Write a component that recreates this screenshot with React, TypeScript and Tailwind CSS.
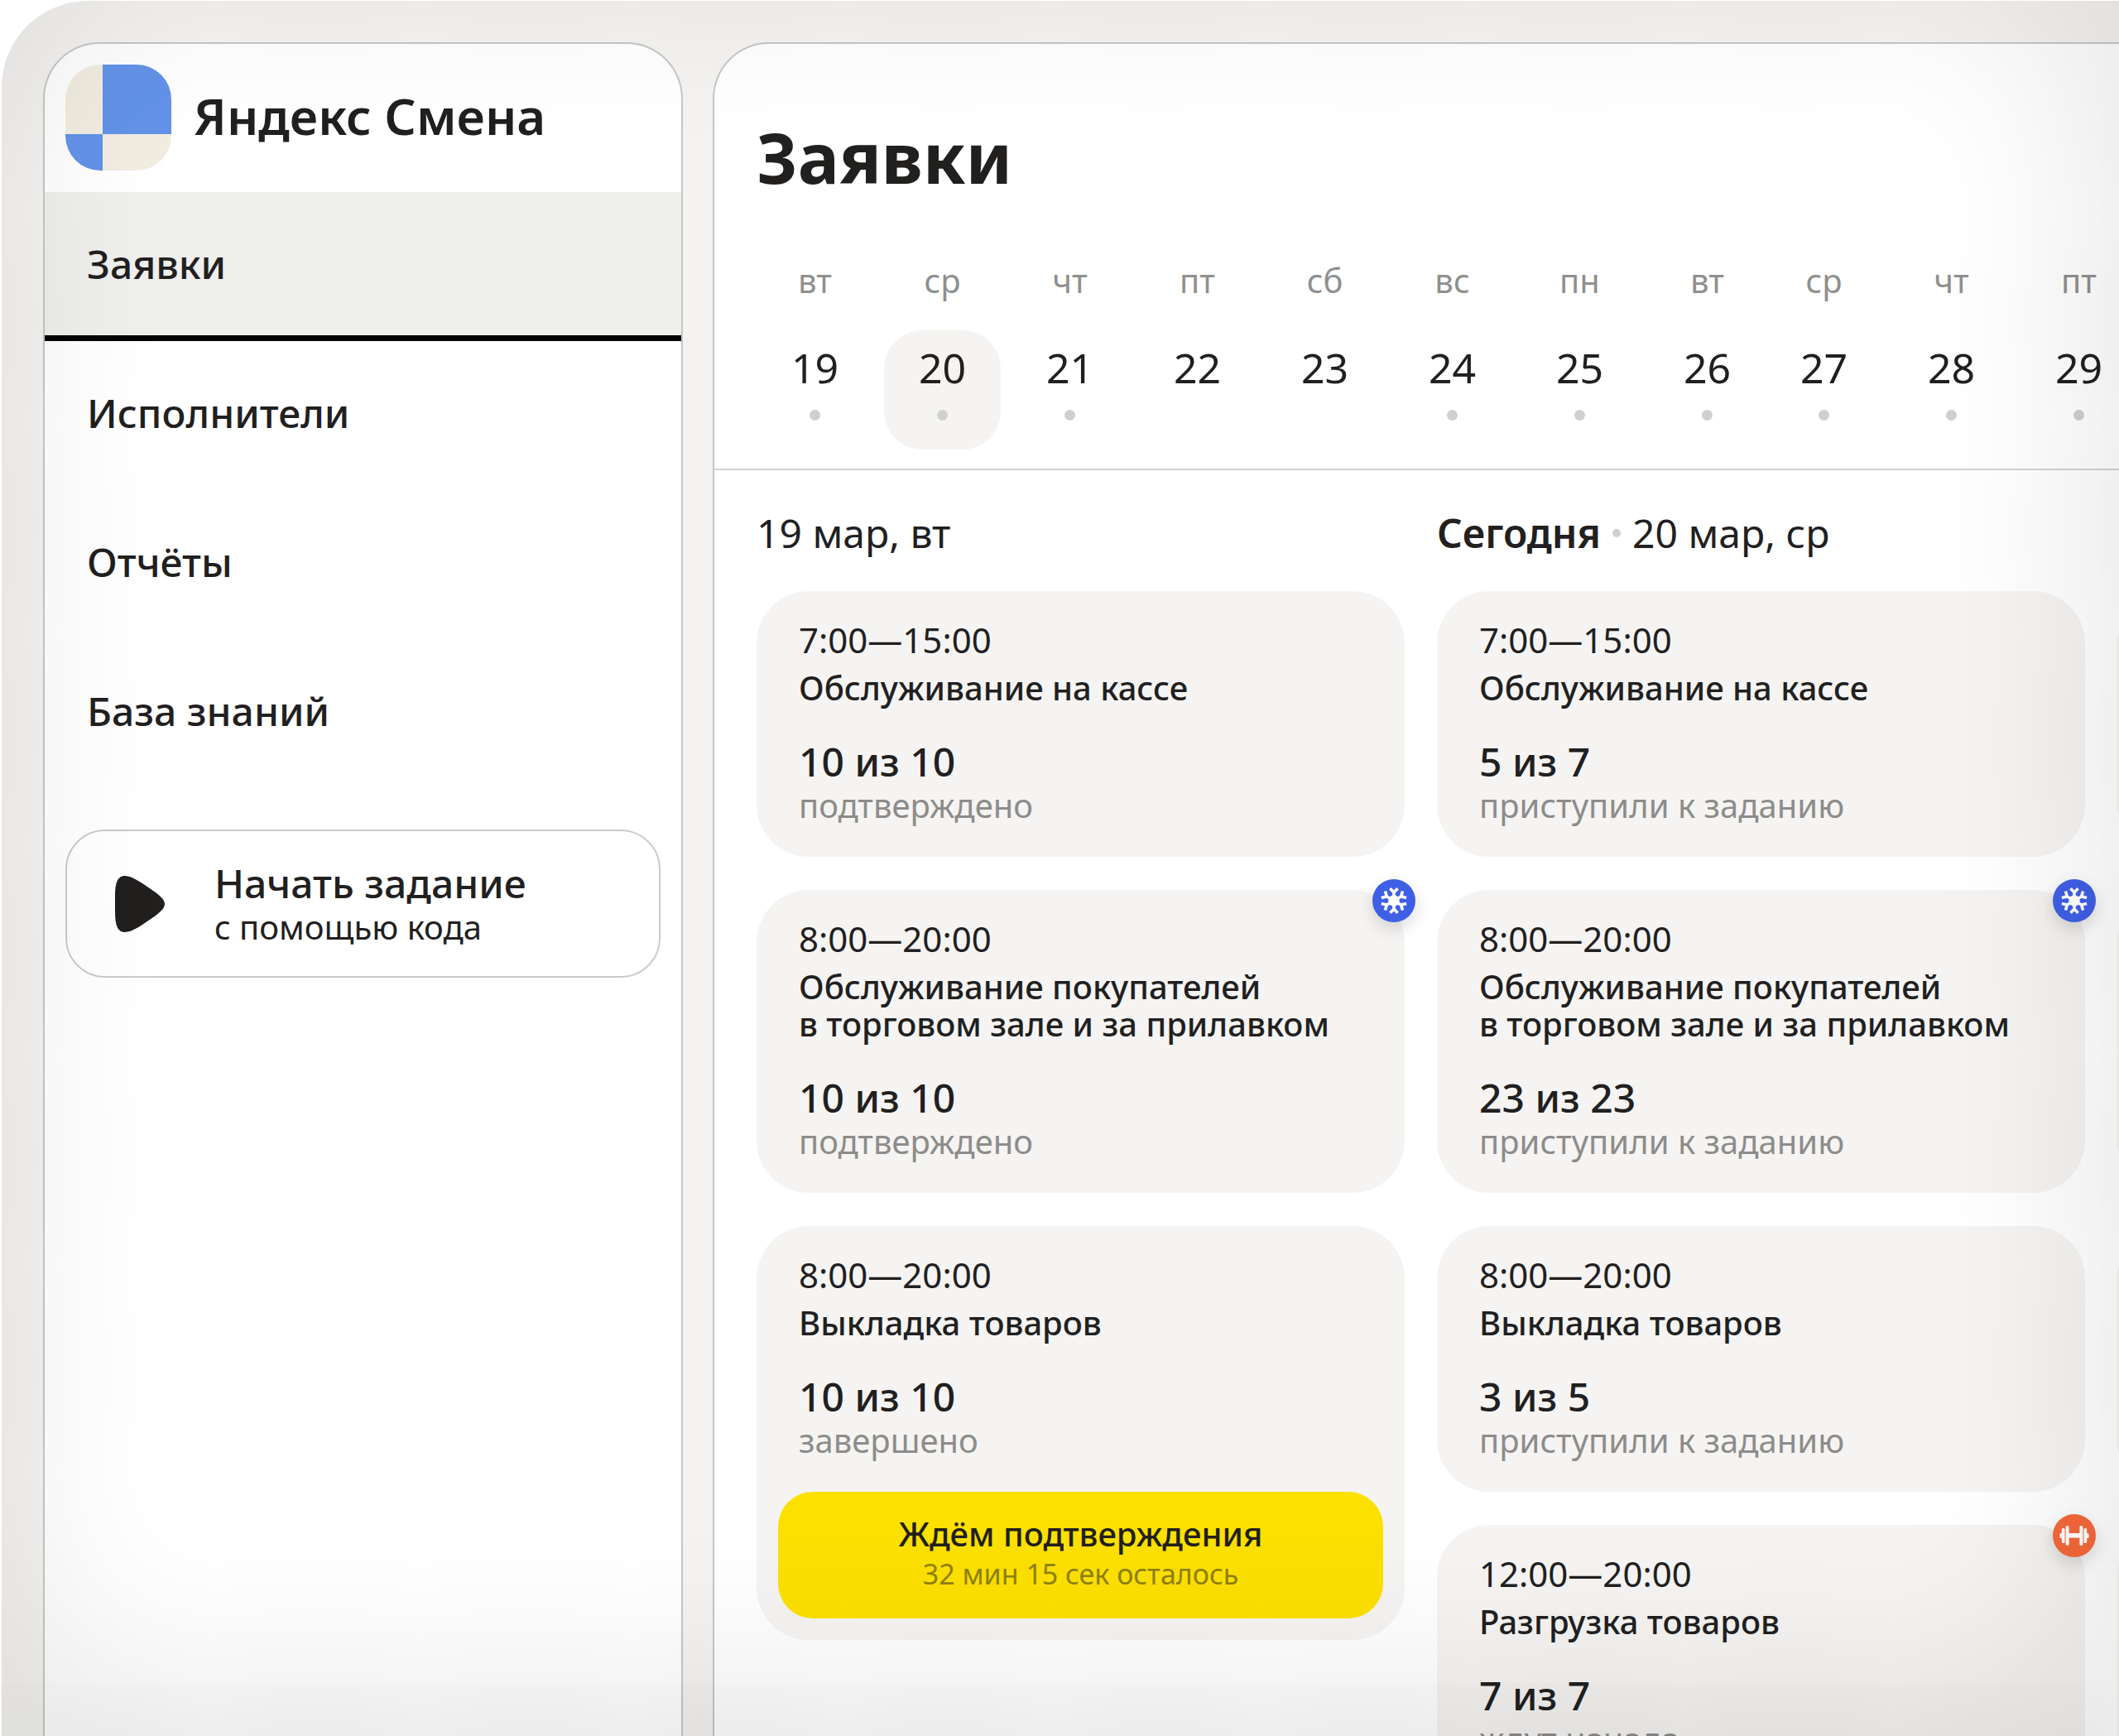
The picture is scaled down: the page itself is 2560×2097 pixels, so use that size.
type Badge = "cold" | "heavy";

type Shift = {
  time: string;
  title: string;
  count: string;
  status: string;
  badge?: Badge;
  action?: { label: string; hint: string };
};

type Day = { weekday: string; date: number; busy?: boolean; active?: boolean };

const menu = ["Заявки", "Исполнители", "Отчёты", "База знаний"];

const weeks: Day[][] = [
  [
    { weekday: "вт", date: 19, busy: true },
    { weekday: "ср", date: 20, busy: true, active: true },
    { weekday: "чт", date: 21, busy: true },
    { weekday: "пт", date: 22 },
    { weekday: "сб", date: 23 },
    { weekday: "вс", date: 24, busy: true },
    { weekday: "пн", date: 25, busy: true },
    { weekday: "вт", date: 26, busy: true },
  ],
  [
    { weekday: "ср", date: 27, busy: true },
    { weekday: "чт", date: 28, busy: true },
    { weekday: "пт", date: 29, busy: true },
  ],
];

// nbsp keeps the preposition with its noun
const store = "Обслуживание покупателей в\u00a0торговом зале и за прилавком";

const columns: { today?: boolean; date: string; shifts: Shift[] }[] = [
  {
    date: "19 мар, вт",
    shifts: [
      { time: "7:00—15:00", title: "Обслуживание на кассе", count: "10 из 10", status: "подтверждено" },
      { time: "8:00—20:00", title: store, count: "10 из 10", status: "подтверждено", badge: "cold" },
      {
        time: "8:00—20:00",
        title: "Выкладка товаров",
        count: "10 из 10",
        status: "завершено",
        action: { label: "Ждём подтверждения", hint: "32 мин 15 сек осталось" },
      },
    ],
  },
  {
    today: true,
    date: "20 мар, ср",
    shifts: [
      { time: "7:00—15:00", title: "Обслуживание на кассе", count: "5 из 7", status: "приступили к заданию" },
      { time: "8:00—20:00", title: store, count: "23 из 23", status: "приступили к заданию", badge: "cold" },
      { time: "8:00—20:00", title: "Выкладка товаров", count: "3 из 5", status: "приступили к заданию" },
      { time: "12:00—20:00", title: "Разгрузка товаров", count: "7 из 7", status: "ждут начала", badge: "heavy" },
    ],
  },
];

function Logo() {
  return (
    <div className="grid size-32 shrink-0 grid-cols-[45px_1fr] grid-rows-[84px_1fr] overflow-hidden rounded-[42px]">
      <span className="bg-[#f1ede0]" />
      <span className="bg-[#6393e9]" />
      <span className="bg-[#6393e9]" />
      <span className="bg-[#f1ede0]" />
    </div>
  );
}

function PlayIcon() {
  return (
    <svg className="h-[68px] w-[60px] shrink-0" viewBox="0 0 60 68" fill="#21201f" aria-hidden="true">
      <path d="M0 26C0 8 3 0 12 0c9 0 21 9 37 20 8 6 11 10 11 14s-3 8-11 14C33 59 21 68 12 68 3 68 0 60 0 42Z" />
    </svg>
  );
}

function SnowIcon() {
  return (
    <svg viewBox="0 0 52 52" fill="none" stroke="#fff" strokeWidth="3.6" aria-hidden="true">
      <circle cx="26" cy="26" r="6.8" fill="#fff" stroke="none" />
      {[0, 60, 120, 180, 240, 300].map((angle) => (
        <path key={angle} transform={`rotate(${angle} 26 26)`} d="M26 26V15.5M21.4 11.2l4.6 4.8 4.6-4.8" />
      ))}
    </svg>
  );
}

function DumbbellIcon() {
  return (
    <svg viewBox="0 0 52 52" fill="#fff" aria-hidden="true">
      <rect x="18" y="23" width="16" height="5.6" />
      <rect x="15.6" y="14" width="4" height="24" rx="1.8" />
      <rect x="32.4" y="14" width="4" height="24" rx="1.8" />
      <rect x="10.8" y="17" width="3.8" height="18" rx="1.6" />
      <rect x="37.4" y="17" width="3.8" height="18" rx="1.6" />
      <rect x="8.4" y="23" width="4" height="6" rx="1.6" />
      <rect x="39.6" y="23" width="4" height="6" rx="1.6" />
    </svg>
  );
}

function ShiftCard({ time, title, count, status, badge, action }: Shift) {
  return (
    <article className="relative rounded-[63px] bg-[#f5f4f2] pt-9">
      {badge && (
        <span
          className={`absolute -top-[13px] -right-[13px] size-[52px] rounded-full shadow-[0_8px_20px_rgba(0,0,0,0.14)] ${
            badge === "cold" ? "bg-[#3f60e6]" : "bg-[#f5683a]"
          }`}
        >
          {badge === "cold" ? <SnowIcon /> : <DumbbellIcon />}
        </span>
      )}
      <div className="px-[51px] text-[40px] leading-[45px]">
        <p className="text-[42px] leading-[45px]">{time}</p>
        <h3 className="mt-[13px] font-medium">{title}</h3>
        <p className="mt-[41px] text-[48px] leading-[52px] font-medium">{count}</p>
        <p className="mt-1 text-[#8d8c8a]">{status}</p>
      </div>
      {action ? (
        <div className="px-[26px] pt-10 pb-[26px]">
          <button type="button" className="h-[153px] w-full rounded-[42px] bg-[#fce000] pb-1 text-center">
            <span className="block text-[40px] leading-[45px] font-medium">{action.label}</span>
            <span className="mt-1 block text-[34px] leading-[45px] text-[#8f8012]">{action.hint}</span>
          </button>
        </div>
      ) : (
        <div className="h-10" />
      )}
    </article>
  );
}

function Sidebar() {
  return (
    <aside className="w-[773px] shrink-0 overflow-hidden rounded-t-[68px] border-2 border-b-0 border-[#c6c6c5] bg-white">
      <header className="flex h-[179px] items-center gap-[27px] px-[25px] pb-[2px]">
        <Logo />
        <span className="pb-1 text-[60px] leading-[64px] font-semibold">Яндекс Смена</span>
      </header>
      <nav>
        {menu.map((item, i) => (
          <a
            key={item}
            href="#"
            className={`flex h-[180px] items-center border-b-[7px] px-[51px] text-[48px] leading-[52px] font-medium ${
              i === 0 ? "border-black bg-[#efefed]" : "border-transparent"
            }`}
          >
            {item}
          </a>
        ))}
      </nav>
      <div className="px-[25px] pt-[50px]">
        <button
          type="button"
          className="flex h-[179px] w-full items-center gap-[60px] rounded-[48px] border-2 border-[#cbcbca] pl-[58px] text-left"
        >
          <PlayIcon />
          <span>
            <span className="block text-[48px] leading-[52px] font-medium">Начать задание</span>
            <span className="mt-1 block text-[40px] leading-[45px]">с помощью кода</span>
          </span>
        </button>
      </div>
    </aside>
  );
}

function Calendar() {
  return (
    <div className="mt-[82px] flex pl-[51px]">
      {weeks.map((week, i) => (
        <div key={i} className="flex shrink-0 gap-[13px]">
          {week.map((day) => (
            <div key={day.date} className="w-[141px] text-center">
              <div className="text-[40px] leading-[45px] text-[#8f8f8e]">{day.weekday}</div>
              <button
                type="button"
                className={`mt-[38px] flex h-36 w-full flex-col items-center rounded-[46px] pt-[19px] ${
                  day.active ? "bg-[#f5f4f2]" : ""
                }`}
              >
                <span className="text-[50px] leading-[52px]">{day.date}</span>
                {day.busy && <span className="mt-[25px] size-[13px] rounded-full bg-[#cfcfcd]" />}
              </button>
            </div>
          ))}
        </div>
      ))}
    </div>
  );
}

export default function App() {
  return (
    <div className="h-screen overflow-hidden bg-white pt-px pl-0.5 font-['Noto_Sans',sans-serif] text-[#21201f]">
      <div className="relative flex h-full gap-9 overflow-hidden rounded-tl-[104px] bg-[#f4f3f1] pt-[50px] pl-[50px]">
        <Sidebar />
        <main className="min-w-0 flex-1 overflow-hidden rounded-tl-[68px] border-t-2 border-l-2 border-[#c6c6c5] bg-white">
          <h1 className="px-[51px] pt-[93px] text-[84px] leading-[88px] font-bold">Заявки</h1>
          <Calendar />
          <div className="mt-[23px] flex gap-[39px] border-t-2 border-[#d3d3d2] pt-[50px] pl-[51px]">
            {columns.map((column) => (
              <section key={column.date} className="w-[783px] shrink-0">
                <h2 className="flex items-center gap-[14px] text-[48px] leading-[52px]">
                  {column.today && (
                    <>
                      <span className="font-semibold">Сегодня</span>
                      <span className="size-[10px] rounded-full bg-[#cfcfcd]" />
                    </>
                  )}
                  {column.date}
                </h2>
                <div className="mt-11 flex flex-col gap-10">
                  {column.shifts.map((shift, i) => (
                    <ShiftCard key={i} {...shift} />
                  ))}
                </div>
              </section>
            ))}
            {/* next day, only its edge shows */}
            <div className="mt-24 flex w-[783px] shrink-0 flex-col gap-10">
              <div className="h-[321px] rounded-[63px] bg-[#f5f4f2]" />
              <div className="h-[366px] rounded-[63px] bg-[#f5f4f2]" />
              <div className="h-[321px] rounded-[63px] bg-[#f5f4f2]" />
              <div className="h-[321px] rounded-[63px] bg-[#f5f4f2]" />
            </div>
          </div>
        </main>
        <div className="pointer-events-none absolute inset-0 rounded-tl-[104px] shadow-[inset_-15px_-40px_220px_rgba(0,0,0,0.14)]" />
      </div>
    </div>
  );
}
